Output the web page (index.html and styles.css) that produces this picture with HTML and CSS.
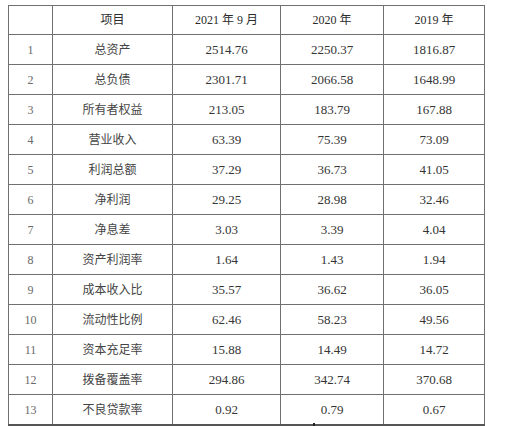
FILE: index.html
```html
<!DOCTYPE html>
<html lang="zh">
<head>
<meta charset="utf-8">
<link rel="stylesheet" href="styles.css">
</head>
<body>
<div class="page">
<table class="data">
<colgroup>
<col class="c-no"><col class="c-item"><col class="c-y1"><col class="c-y2"><col class="c-y3">
</colgroup>
<thead>
<tr class="head"><th></th><th>项目</th><th>2021 年 9 月</th><th>2020 年</th><th>2019 年</th></tr>
</thead>
<tbody>
<tr><td class="no">1</td><td class="cn">总资产</td><td>2514.76</td><td>2250.37</td><td>1816.87</td></tr>
<tr><td class="no">2</td><td class="cn">总负债</td><td>2301.71</td><td>2066.58</td><td>1648.99</td></tr>
<tr><td class="no">3</td><td class="cn">所有者权益</td><td>213.05</td><td>183.79</td><td>167.88</td></tr>
<tr><td class="no">4</td><td class="cn">营业收入</td><td>63.39</td><td>75.39</td><td>73.09</td></tr>
<tr><td class="no">5</td><td class="cn">利润总额</td><td>37.29</td><td>36.73</td><td>41.05</td></tr>
<tr><td class="no">6</td><td class="cn">净利润</td><td>29.25</td><td>28.98</td><td>32.46</td></tr>
<tr><td class="no">7</td><td class="cn">净息差</td><td>3.03</td><td>3.39</td><td>4.04</td></tr>
<tr><td class="no">8</td><td class="cn">资产利润率</td><td>1.64</td><td>1.43</td><td>1.94</td></tr>
<tr><td class="no">9</td><td class="cn">成本收入比</td><td>35.57</td><td>36.62</td><td>36.05</td></tr>
<tr><td class="no">10</td><td class="cn">流动性比例</td><td>62.46</td><td>58.23</td><td>49.56</td></tr>
<tr><td class="no">11</td><td class="cn">资本充足率</td><td>15.88</td><td>14.49</td><td>14.72</td></tr>
<tr><td class="no">12</td><td class="cn">拨备覆盖率</td><td>294.86</td><td>342.74</td><td>370.68</td></tr>
<tr><td class="no">13</td><td class="cn">不良贷款率</td><td>0.92</td><td>0.79</td><td>0.67</td></tr>
</tbody>
</table>
<div class="mark"></div>
</div>
</body>
</html>
```
FILE: styles.css
```css
html, body {
  margin: 0;
  padding: 0;
  background: #ffffff;
}
.page {
  width: 508px;
  height: 426px;
  padding: 5px 0 0 8px;
  box-sizing: border-box;
  position: relative;
}
.data {
  border-collapse: collapse;
  table-layout: fixed;
  width: 476px;
  font-family: "Liberation Serif", "Noto Sans CJK SC", serif;
  font-size: 13px;
  color: #353535;
}
.c-no { width: 44px; }
.c-item { width: 120px; }
.c-y1 { width: 108px; }
.c-y2 { width: 103px; }
.c-y3 { width: 101px; }
.data th, .data td {
  border: 1px solid #707070;
  text-align: center;
  padding: 0;
  height: 29px;
  line-height: 16px;
}
.data th {
  font-weight: normal;
  height: 28px;
  font-size: 12px;
  color: #2c2c2c;
}
.data td.no {
  color: #6a6a6a;
  font-size: 12px;
}
.data td.cn {
  font-size: 12px;
  color: #444444;
}
.data tbody tr:last-child td {
  border-bottom: 2px solid #555555;
}
.mark {
  position: absolute;
  left: 313px;
  top: 423px;
  width: 2px;
  height: 3px;
  background: #222222;
}
```
